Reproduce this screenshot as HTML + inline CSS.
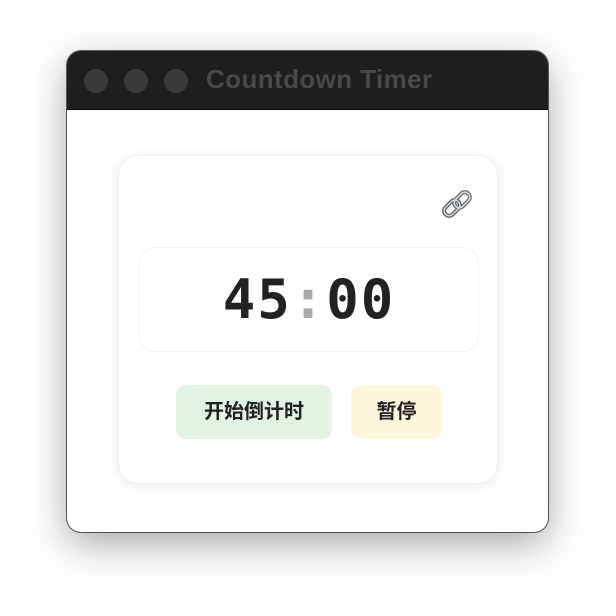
<!DOCTYPE html>
<html><head><meta charset="utf-8"><style>
body{margin:0;width:616px;height:616px;background:#fff;position:relative;overflow:hidden;font-family:"Liberation Sans","Noto Sans CJK SC",sans-serif}
.win{position:absolute;left:67px;top:51px;width:481px;height:481px;border-radius:14px;background:#fff;box-shadow:0 12px 40px rgba(0,0,0,.35),0 0 0 1px rgba(0,0,0,.6);overflow:hidden}
.bar{position:absolute;left:0;top:0;width:100%;height:58px;background:#1f1e1d;border-bottom:1px solid #000}
.dot{position:absolute;top:18px;width:24px;height:24px;border-radius:50%;background:#3b3a39}
.title{position:absolute;left:139px;top:12px;font-size:26px;font-weight:bold;color:#4a4948;line-height:32px;letter-spacing:0.4px}
.card{position:absolute;left:51px;top:104px;width:380px;height:329px;border-radius:20px;background:#fff;box-shadow:0 2px 12px rgba(0,0,0,.08);border:1px solid #f0f0f0;box-sizing:border-box}
.time{position:absolute;left:20px;top:91px;width:340px;height:105px;border-radius:16px;border:1px solid #f2f2f2;box-sizing:border-box;background:#fff;text-align:center;font-family:"DejaVu Sans Mono","Liberation Mono",monospace;font-weight:bold;font-size:54px;line-height:103px;color:#222;letter-spacing:2px}
.time span{color:#aaa}
.btn{position:absolute;top:229px;height:54px;border-radius:10px;font-size:20px;font-weight:bold;color:#222;text-align:center;line-height:54px}
</style></head><body>
<div class="win">
 <div class="bar">
  <div class="dot" style="left:17px"></div><div class="dot" style="left:57px"></div><div class="dot" style="left:97px"></div>
  <div class="title">Countdown Timer</div>
 </div>
 <div class="card">
  <svg style="position:absolute;left:320px;top:32px" width="36" height="36" viewBox="0 0 36 36">
   <g fill="none" stroke-width="4">
    <rect x="4" y="15" width="18" height="10" rx="5" transform="rotate(-45 13 20)" stroke="#555"/>
    <rect x="14" y="7" width="18" height="10" rx="5" transform="rotate(-45 23 12)" stroke="#666"/>
   </g>
   <g fill="none" stroke-width="1.6">
    <rect x="4" y="15" width="18" height="10" rx="5" transform="rotate(-45 13 20)" stroke="#cfd6dd"/>
    <rect x="14" y="7" width="18" height="10" rx="5" transform="rotate(-45 23 12)" stroke="#d5dbe1"/>
   </g>
  </svg>
  <div class="time">45<span>:</span>00</div>
  <div class="btn" style="left:57px;width:156px;background:#e2f2e3">开始倒计时</div>
  <div class="btn" style="left:232px;width:91px;background:#fdf6dc">暂停</div>
 </div>
</div>
</body></html>
